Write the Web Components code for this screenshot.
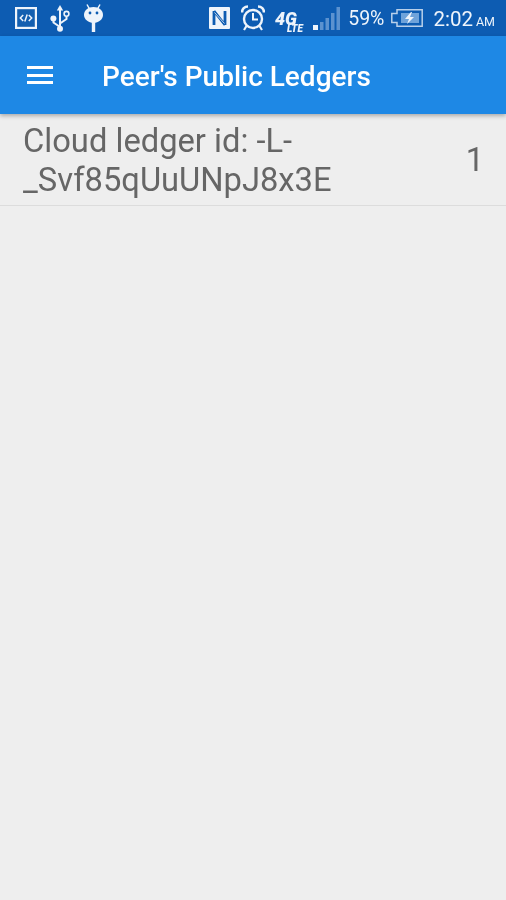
<!DOCTYPE html>
<html>
<head>
<meta charset="utf-8">
<title>Peer's Public Ledgers</title>
<style>
  html, body { margin: 0; height: 100%; background: #eeeeee; }
  body { width: 506px; height: 900px; overflow: hidden; font-family: Roboto, sans-serif; }
</style>
</head>
<body>
<ledger-app>
  <status-bar></status-bar>
  <app-toolbar title="Peer's Public Ledgers"></app-toolbar>
  <ledger-row count="1">Cloud ledger id: -L-<br>_Svf85qUuUNpJ8x3E</ledger-row>
</ledger-app>
<script>
(() => {
  class LedgerApp extends HTMLElement {
    constructor() {
      super();
      this.attachShadow({ mode: "open" }).innerHTML = `
        <style>
          :host { display: flex; flex-direction: column; height: 900px; background: #eeeeee; }
        </style>
        <slot></slot>
      `;
    }
  }

  class StatusBar extends HTMLElement {
    constructor() {
      super();
      this.attachShadow({ mode: "open" }).innerHTML = `
        <style>
          :host {
            display: flex; align-items: center; justify-content: space-between;
            height: 36px; padding: 0 11px 0 15px; box-sizing: border-box;
            background: #0d5cb2; color: #eef4fb;
            font-family: Roboto, sans-serif;
          }
          .side { display: flex; align-items: center; filter: blur(.35px); }
          svg { display: block; flex: none; }
          .pct { font-size: 19.5px; margin: 1px 0 0 8px; }
          .time { font-size: 20.5px; margin: 1px 0 0 10px; }
          .time small { font-size: 12.5px; margin-left: 3px; }
        </style>
        <div class="side">
          <svg width="22" height="22" viewBox="0 0 22 22">
            <rect x="1.1" y="1.1" width="19.8" height="19.8" fill="#135fb0" stroke="#eef4fb" stroke-width="2.2"/>
            <path d="M8.200 8 5.300 11l2.900 3M13.800 8l2.900 3-2.900 3M12.200 7.500l-2.400 7" fill="none" stroke="#eef4fb" stroke-width="1.500"/>
          </svg>
          <svg width="20" height="28" viewBox="0 0 20 28" style="margin-left:13px">
            <path d="M10 1 6.800 6.500h6.400z" fill="#eef4fb"/>
            <path d="M10 5v20M10 19.500l6.500-4.500v-3M10 23 3.500 18.500V15" fill="none" stroke="#eef4fb" stroke-width="2"/>
            <circle cx="10" cy="24.800" r="3" fill="#eef4fb"/>
            <circle cx="16.500" cy="9.800" r="2.400" fill="none" stroke="#eef4fb" stroke-width="1.600"/>
            <circle cx="3.400" cy="14.500" r="3" fill="#eef4fb"/>
          </svg>
          <svg width="19" height="28" viewBox="0 0 19 28" style="margin-left:14px">
            <path d="M3 .5 5.500 5M16 .5 13.500 5" stroke="#eef4fb" stroke-width="1.500" fill="none"/>
            <path d="M9.500 3c5.500 0 9.500 3.500 9.500 7.800 0 4.700-4.500 8.200-9.500 8.200S0 15.500 0 10.800C0 6.500 4 3 9.500 3z" fill="#eef4fb"/>
            <rect x="7.800" y="17" width="3.400" height="11" fill="#eef4fb"/>
            <circle cx="6" cy="9" r="1.400" fill="#0d5cb2"/>
            <circle cx="13" cy="9" r="1.400" fill="#0d5cb2"/>
          </svg>
        </div>
        <div class="side">
          <svg width="21" height="22" viewBox="0 0 21 22">
            <rect width="21" height="22" rx="1" fill="#eef4fb"/>
            <path d="M5 4v14M5 4l11 14M16 4v14" stroke="#0d5cb2" stroke-width="2.800" fill="none"/>
            <path d="M5.500 5.500 15.500 16.500" stroke="#eef4fb" stroke-width=".8" fill="none"/>
          </svg>
          <svg width="24" height="26" viewBox="0 0 24 26" style="margin-left:11px">
            <circle cx="12" cy="14" r="9" fill="none" stroke="#eef4fb" stroke-width="2.400"/>
            <path d="M12 8v6.500h5" fill="none" stroke="#eef4fb" stroke-width="2"/>
            <path d="M1 7.500C1 4 3.500 1.500 7 1.500M23 7.500C23 4 20.500 1.500 17 1.500" fill="none" stroke="#eef4fb" stroke-width="2.600"/>
            <path d="M5.500 21 3 25M18.500 21l2.500 4" stroke="#eef4fb" stroke-width="2.200"/>
          </svg>
          <svg width="30" height="36" viewBox="0 0 30 36" style="margin-left:10px">
            <text x="0" y="25" font-family="Roboto" font-weight="900" font-style="italic" font-size="18" fill="#eef4fb">4G</text>
            <text x="12" y="32" font-family="Roboto" font-weight="900" font-style="italic" font-size="10" fill="#eef4fb">LTE</text>
          </svg>
          <svg width="27" height="23" viewBox="0 0 27 23" style="margin-left:8px">
            <rect x="0" y="18" width="5" height="5" fill="#eef4fb"/>
            <rect x="7" y="15" width="3.500" height="8" fill="#5c92cf"/>
            <rect x="12.500" y="11" width="3.500" height="12" fill="#5c92cf"/>
            <rect x="18" y="6" width="3.500" height="17" fill="#5c92cf"/>
            <rect x="23.500" y="0" width="3.500" height="23" fill="#5c92cf"/>
          </svg>
          <span class="pct">59%</span>
          <svg width="32" height="18" viewBox="0 0 32 18" style="margin-left:7px">
            <path d="M6 4.500V.8h25.200v16.400H6v-3.700H.8v-9z" fill="none" stroke="#b9d0ea" stroke-width="1.500"/>
            <rect x="10" y="4" width="18" height="10" fill="#6fa3da"/>
            <path d="M20 3 14 10h4l-2 5 7-7h-4l2-5z" fill="#eef4fb"/>
          </svg>
          <span class="time">2:02<small>AM</small></span>
        </div>
      `;
    }
  }

  class AppToolbar extends HTMLElement {
    constructor() {
      super();
      this.attachShadow({ mode: "open" }).innerHTML = `
        <style>
          :host {
            display: flex; align-items: center; flex: none;
            height: 78px; padding-left: 27px; box-sizing: border-box;
            background: #1e88e5; color: #fff;
            box-shadow: 0 2px 4px rgba(0,0,0,.28);
            position: relative; z-index: 1;
            font-family: Roboto, sans-serif;
          }
          .menu { width: 26px; height: 18px; display: flex; flex-direction: column; justify-content: space-between; }
          .menu i { display: block; height: 3px; background: #fff; }
          h1 { margin: 2px 0 0 49px; font-size: 28px; font-weight: 500; filter: blur(.3px); }
        </style>
        <div class="menu"><i></i><i></i><i></i></div>
        <h1></h1>
      `;
      this.shadowRoot.querySelector("h1").textContent = this.getAttribute("title");
    }
  }

  class LedgerRow extends HTMLElement {
    constructor() {
      super();
      this.attachShadow({ mode: "open" }).innerHTML = `
        <style>
          :host {
            display: flex; align-items: center; justify-content: space-between;
            height: 92px; padding: 0 22px 0 23px; box-sizing: border-box;
            border-bottom: 1px solid #dcdcdc;
            color: #666666; font-family: Roboto, sans-serif; font-size: 32.7px; line-height: 39px;
          }
          div { filter: blur(.3px); }
          .label { margin-top: 3px; }
          .count { margin-top: 2px; }
        </style>
        <div class="label"><slot></slot></div>
        <div class="count"></div>
      `;
      this.shadowRoot.querySelector(".count").textContent = this.getAttribute("count");
    }
  }

  customElements.define("ledger-app", LedgerApp);
  customElements.define("status-bar", StatusBar);
  customElements.define("app-toolbar", AppToolbar);
  customElements.define("ledger-row", LedgerRow);
})();
</script>
</body>
</html>
